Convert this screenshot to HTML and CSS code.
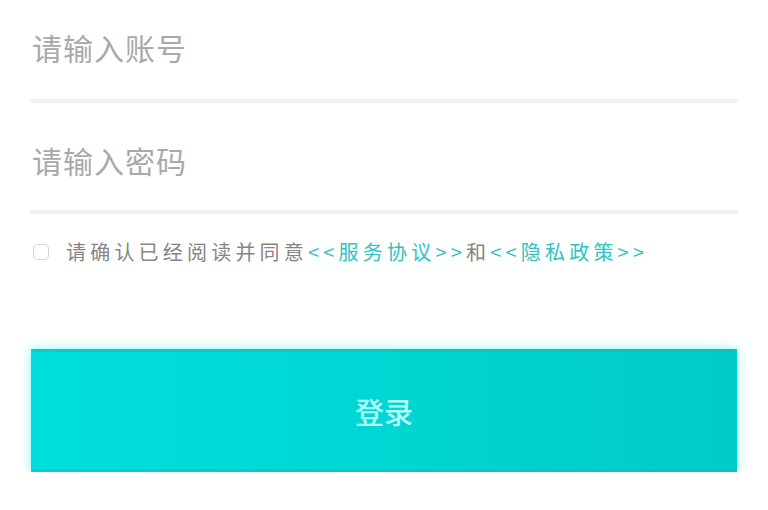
FILE: index.html
```html
<!DOCTYPE html>
<html lang="zh-CN">
<head>
<meta charset="utf-8">
<title>登录</title>
<link rel="stylesheet" href="styles.css">
</head>
<body>
<main class="login">
  <div class="field field-account">请输入账号</div>
  <div class="field field-password">请输入密码</div>
  <div class="agree">
    <span class="checkbox"></span>
    <span class="agree-text">请确认已经阅读并同意<span class="link">&lt;&lt;服务协议&gt;&gt;</span>和<span class="link">&lt;&lt;隐私政策&gt;&gt;</span></span>
  </div>
  <button class="submit">登录</button>
</main>
</body>
</html>
```
FILE: styles.css
```css
html, body {
  margin: 0;
  padding: 0;
  background: #ffffff;
}
body {
  font-family: "Noto Sans CJK SC", "Noto Sans", sans-serif;
}
.login {
  padding: 0 30px 0 30px;
  display: flex;
  flex-direction: column;
}
.field {
  border-bottom: 4px solid #f1f1f1;
  padding-left: 2px;
  font-size: 30px;
  line-height: 34px;
  height: 34px;
  color: #a9a9a9;
  letter-spacing: 1px;
}
.field-account {
  padding-top: 30px;
  padding-bottom: 35px;
}
.field-password {
  padding-top: 40px;
  padding-bottom: 33px;
}
.agree {
  display: flex;
  align-items: center;
  gap: 17px;
  margin-top: 27px;
  padding-left: 3px;
  height: 22px;
}
.checkbox {
  width: 14px;
  height: 14px;
  border: 1.5px solid #d6d6d6;
  border-radius: 4px;
  flex: none;
}
.agree-text {
  font-size: 20px;
  line-height: 22px;
  height: 22px;
  color: #858585;
  letter-spacing: 4.2px;
  white-space: nowrap;
}
.link {
  color: #2fc3c3;
}
.submit {
  margin-top: 86px;
  margin-left: 1px;
  margin-right: 1px;
  height: 123px;
  border: none;
  background: linear-gradient(90deg, #00dfdc 0%, #00d6d3 50%, #00cbc8 100%);
  box-shadow: 0 0 10px rgba(40, 235, 240, 0.55), inset 0 3px 0 rgba(40, 170, 170, 0.35), inset 0 -3px 0 rgba(40, 170, 170, 0.35);
  color: #b4ffff;
  font-family: "Noto Sans CJK SC", "Noto Sans", sans-serif;
  font-size: 29px;
  line-height: 34px;
  font-weight: 500;
  padding: 0;
}
```
